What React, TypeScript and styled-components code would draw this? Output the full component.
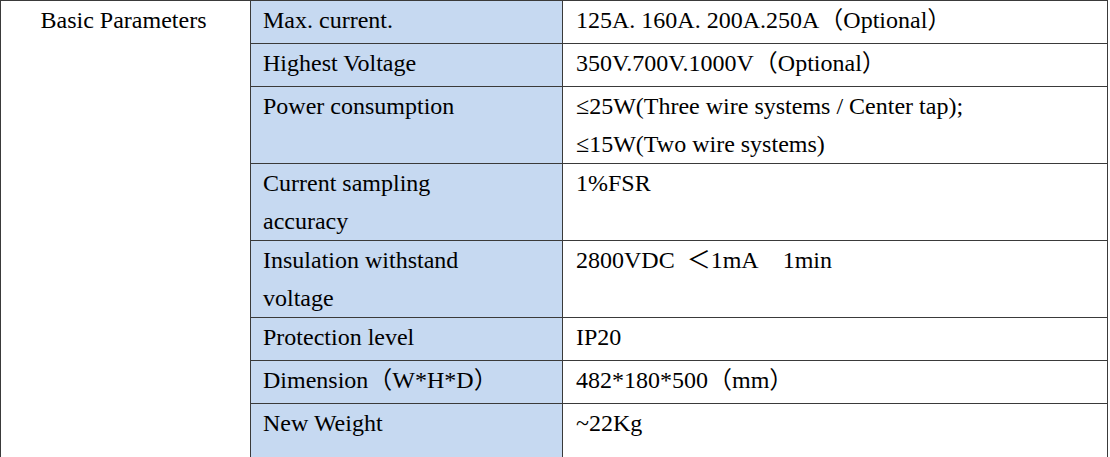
import * as React from 'react';
import styled, { createGlobalStyle } from 'styled-components';

const BORDER = '#3a3a3a';
const LABEL_BG = '#c6d9f1';

interface SpecRow {
    label: string[];
    value: string[];
    tall?: boolean;
}

const specRows: SpecRow[] = [
    { label: ['Max. current.'], value: ['125A. 160A. 200A.250A（Optional）'] },
    { label: ['Highest Voltage'], value: ['350V.700V.1000V（Optional）'] },
    {
        label: ['Power consumption'],
        value: ['≤25W(Three wire systems / Center tap);', '≤15W(Two wire systems)']
    },
    { label: ['Current sampling', 'accuracy'], value: ['1%FSR'] },
    { label: ['Insulation withstand', 'voltage'], value: ['2800VDC\u00a0\u00a0＜1mA\u00a0\u00a0\u00a0\u00a01min'] },
    { label: ['Protection level'], value: ['IP20'] },
    { label: ['Dimension（W*H*D）'], value: ['482*180*500（mm）'] },
    { label: ['New Weight'], value: ['~22Kg'], tall: true }
];

export default function App() {
    return (
        <React.Fragment>
            <GlobalStyle />
            <Sheet>
                <GroupCell style={{ gridRow: `1 / span ${specRows.length}` }}>
                    Basic Parameters
                </GroupCell>
                {specRows.map((row) => (
                    <React.Fragment key={row.label.join(' ')}>
                        <LabelCell $tall={row.tall}>
                            {row.label.map((line) => <Line key={line}>{line}</Line>)}
                        </LabelCell>
                        <ValueCell $tall={row.tall}>
                            {row.value.map((line) => <Line key={line}>{line}</Line>)}
                        </ValueCell>
                    </React.Fragment>
                ))}
            </Sheet>
        </React.Fragment>
    );
}

const GlobalStyle = createGlobalStyle`
    html, body {
        margin: 0;
        padding: 0;
        background: #ffffff;
    }
    body {
        font-family: "Liberation Serif", "Noto Sans CJK SC", serif;
        color: #000000;
        -webkit-font-smoothing: antialiased;
    }
`;

const Sheet = styled.div`
    display: grid;
    grid-template-columns: 250px 312px 545px;
    grid-auto-rows: minmax(43px, auto);
    width: 1108px;
    border-top: 1px solid ${BORDER};
    border-left: 1px solid ${BORDER};
    box-sizing: border-box;
    font-size: 24px;
    line-height: 38px;
`;

const Cell = styled.div<{ $tall?: boolean }>`
    box-sizing: border-box;
    border-right: 1px solid ${BORDER};
    border-bottom: 1px solid ${BORDER};
    padding: 0 12px;
    min-height: ${({ $tall }) => ($tall ? '77px' : '43px')};
    white-space: nowrap;
`;

const GroupCell = styled(Cell)`
    grid-column: 1;
    text-align: center;
    padding-right: 16px;
`;

const LabelCell = styled(Cell)`
    grid-column: 2;
    background: ${LABEL_BG};
`;

const ValueCell = styled(Cell)`
    grid-column: 3;
    padding-left: 13px;
`;

const Line = styled.div`
    height: 38px;
`;
